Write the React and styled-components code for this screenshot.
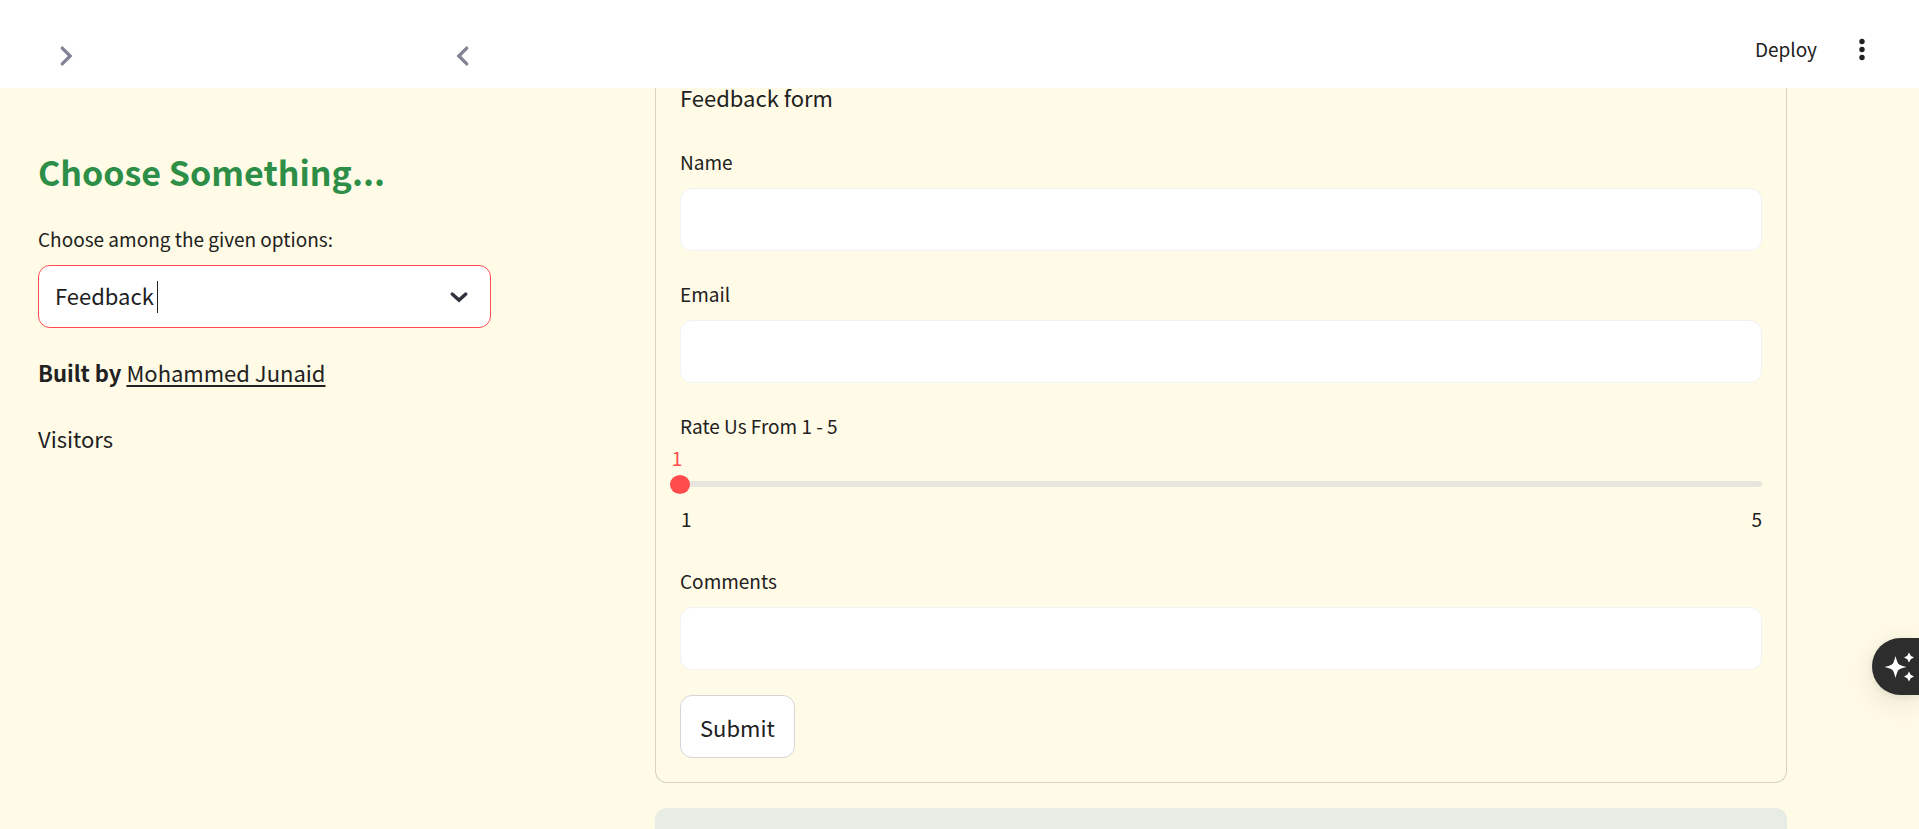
import React, { useState } from "react";
import styled, { createGlobalStyle } from "styled-components";

const ink = "#212121";
const accent = "#ff4b4b";
const cream = "#fffbe6";

const GlobalStyle = createGlobalStyle`
  *, *::before, *::after { box-sizing: border-box; }
  body {
    margin: 0;
    background: ${cream};
    color: ${ink};
    font-family: "Noto Sans CJK SC", "Noto Sans", sans-serif;
    font-size: 22px;
    line-height: 40px;
  }
  button, input, select { font: inherit; color: inherit; }
`;

const Page = styled.div`
  height: 100vh;
  overflow: hidden;
  display: flex;
  flex-direction: column;
`;

const Header = styled.header`
  position: relative;
  z-index: 1;
  flex: none;
  height: 88px;
  background: #fff;
  display: flex;
  justify-content: space-between;
`;

const SidebarControls = styled.div`
  width: 529px;
  padding: 38px 48px 0;
  display: flex;
  justify-content: space-between;
`;

const Toolbar = styled.div`
  height: 98px;
  padding-right: 39px;
  display: flex;
  align-items: center;
  gap: 27px;
`;

const PlainButton = styled.button`
  border: 0;
  padding: 0;
  background: none;
  display: flex;
  align-items: center;
  height: 36px;
  font-size: 19px;
  line-height: 36px;
  cursor: pointer;
`;

const Columns = styled.div`
  flex: 1;
  min-height: 0;
  display: flex;
`;

const Sidebar = styled.aside`
  flex: none;
  width: 529px;
  padding: 60px 38px 0;
`;

const Title = styled.h1`
  margin: 0 0 25px;
  font-size: 34px;
  line-height: 48px;
  font-weight: 700;
  color: #2d8e47;
`;

const Label = styled.label`
  display: block;
  height: 36px;
  margin-bottom: 8px;
  font-size: 19px;
  line-height: 36px;
`;

const SelectBox = styled.div`
  height: 63px;
  margin-bottom: 24px;
  padding: 0 14px 0 16px;
  display: flex;
  align-items: center;
  background: #fff;
  border: 1px solid ${accent};
  border-radius: 12px;
`;

const Select = styled.select`
  appearance: none;
  field-sizing: content;
  border: 0;
  padding: 0 0 4px;
  outline: 0;
  background: none;
  line-height: 40px;
`;

const Caret = styled.span`
  width: 1px;
  height: 32px;
  margin: 0 auto 0 3px;
  background: ${ink};
`;

const Paragraph = styled.p`
  margin: 0 0 26px;
`;

const AuthorLink = styled.a`
  color: inherit;
  text-decoration: underline;
  text-decoration-thickness: 2px;
  text-underline-offset: 3px;
`;

const Main = styled.main`
  flex: 1;
  min-width: 0;
  padding: 0 132px 0 126px;
`;

const FormCard = styled.form`
  margin: -11px 0 25px;
  padding: 0 24px 24px;
  border: 1px solid #d5d3c4;
  border-top: 0;
  border-radius: 0 0 12px 12px;
  display: flex;
  flex-direction: column;
  gap: 25px;
`;

const FormTitle = styled.p`
  margin: 0 0 2px;
`;

const TextBox = styled.input`
  display: block;
  width: 100%;
  height: 63px;
  padding: 0 16px;
  background: #fff;
  border: 1px solid #f0f2f6;
  border-radius: 12px;
  outline: 0;
`;

const SliderField = styled.div`
  height: 130px;
`;

const SliderValue = styled.output`
  display: block;
  width: 20px;
  margin: -11px 0 0 -13px;
  text-align: center;
  font-size: 19px;
  line-height: 33px;
  color: ${accent};
`;

const SliderTrack = styled.div`
  display: grid;
  align-items: center;
  height: 20px;

  &::before {
    content: "";
    grid-area: 1 / 1;
    height: 6px;
    border-radius: 3px;
    background: #e6e6df;
  }
`;

const Range = styled.input`
  grid-area: 1 / 1;
  appearance: none;
  width: calc(100% + 20px);
  height: 20px;
  margin: 0 -10px;
  background: none;

  &::-webkit-slider-thumb {
    appearance: none;
    width: 20px;
    height: 19px;
    border-radius: 50%;
    background: ${accent};
  }
`;

const RangeEnds = styled.div`
  display: flex;
  justify-content: space-between;
  padding: 5px 0 0 1px;
  font-size: 19px;
`;

const Submit = styled.button`
  align-self: flex-start;
  height: 63px;
  padding: 0 19px;
  background: #fff;
  border: 1px solid #d5d5d9;
  border-radius: 12px;
  cursor: pointer;
`;

const Notice = styled.div`
  height: 80px;
  border-radius: 12px;
  background: #e7ece4;
`;

const Assistant = styled.button`
  position: fixed;
  right: 0;
  top: 638px;
  width: 47px;
  height: 57px;
  padding: 0 0 0 12px;
  border: 0;
  border-radius: 29px 0 0 29px;
  background: #2d2d2d;
  box-shadow: 0 8px 32px rgba(0, 0, 0, 0.1), 0 2px 8px rgba(0, 0, 0, 0.08);
  display: flex;
  align-items: center;
  cursor: pointer;
`;

const Chevron = ({ d, size = 36, color = "#808495", weight = 2 }) => (
  <svg width={size} height={size} viewBox="0 0 24 24" fill="none" stroke={color} strokeWidth={weight} strokeLinecap="round" aria-hidden="true">
    <path d={d} />
  </svg>
);

const MoreIcon = () => (
  <svg width="36" height="36" viewBox="0 0 36 36" fill={ink} aria-hidden="true">
    <circle cx="18" cy="10.5" r="2.7" />
    <circle cx="18" cy="18.5" r="2.7" />
    <circle cx="18" cy="26.5" r="2.7" />
  </svg>
);

const SparkleIcon = () => (
  <svg width="32" height="32" viewBox="0 0 32 32" fill="#fff" aria-hidden="true">
    <path d="M11.5 5 Q13.2 11.5 14.5 13 Q16 14.3 22.5 16 Q16 17.7 14.5 19 Q13.2 20.5 11.5 27 Q9.8 20.5 8.5 19 Q7 17.7 .5 16 Q7 14.3 8.5 13 Q9.8 11.5 11.5 5 Z" />
    <path d="M25 1.5 L26.7 4.8 L30 6.5 L26.7 8.2 L25 11.5 L23.3 8.2 L20 6.5 L23.3 4.8 Z" />
    <path d="M25 20.5 L26.7 23.8 L30 25.5 L26.7 27.2 L25 30.5 L23.3 27.2 L20 25.5 L23.3 23.8 Z" />
  </svg>
);

const Field = ({ id, label, type = "text" }) => (
  <div>
    <Label htmlFor={id}>{label}</Label>
    <TextBox id={id} type={type} />
  </div>
);

export default function App() {
  const [rating, setRating] = useState(1);
  return (
    <Page>
      <GlobalStyle />
      <Header>
        <SidebarControls>
          <PlainButton type="button" aria-label="Open sidebar">
            <Chevron d="M9.5 6.7 L14.8 12 L9.5 17.3" weight={2.2} />
          </PlainButton>
          <PlainButton type="button" aria-label="Close sidebar">
            <Chevron d="M14.5 6.7 L9.2 12 L14.5 17.3" weight={2.2} />
          </PlainButton>
        </SidebarControls>
        <Toolbar>
          <PlainButton type="button">Deploy</PlainButton>
          <PlainButton type="button" aria-label="Main menu">
            <MoreIcon />
          </PlainButton>
        </Toolbar>
      </Header>
      <Columns>
        <Sidebar>
          <Title>Choose Something...</Title>
          <Label htmlFor="section">Choose among the given options:</Label>
          <SelectBox>
            <Select id="section" defaultValue="Feedback">
              <option>Feedback</option>
            </Select>
            <Caret />
            <Chevron d="M7.2 9.9 L12 14.2 L16.8 9.9" size={34} color="#31333f" weight={2.4} />
          </SelectBox>
          <Paragraph>
            <strong>Built by</strong> <AuthorLink href="#author">Mohammed Junaid</AuthorLink>
          </Paragraph>
          <Paragraph>Visitors</Paragraph>
        </Sidebar>
        <Main>
          <FormCard onSubmit={(e) => e.preventDefault()}>
            <FormTitle>Feedback form</FormTitle>
            <Field id="name" label="Name" />
            <Field id="email" label="Email" type="email" />
            <SliderField>
              <Label htmlFor="rating">Rate Us From 1 - 5</Label>
              <SliderValue htmlFor="rating">{rating}</SliderValue>
              <SliderTrack>
                <Range id="rating" type="range" min="1" max="5" value={rating} onChange={(e) => setRating(e.target.value)} />
              </SliderTrack>
              <RangeEnds>
                <span>1</span>
                <span>5</span>
              </RangeEnds>
            </SliderField>
            <Field id="comments" label="Comments" />
            <Submit type="submit">Submit</Submit>
          </FormCard>
          <Notice role="status" />
        </Main>
      </Columns>
      <Assistant type="button" aria-label="Assistant">
        <SparkleIcon />
      </Assistant>
    </Page>
  );
}
